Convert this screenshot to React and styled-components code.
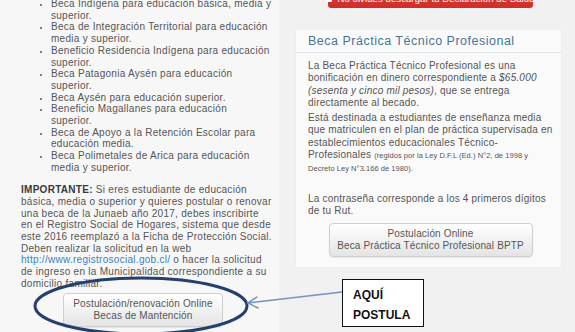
import styled, { createGlobalStyle } from 'styled-components';

const GlobalStyle = createGlobalStyle`
  html, body {
    margin: 0;
    padding: 0;
  }
  body {
    background: #f1f1f1;
    font-family: "Liberation Sans", Arial, sans-serif;
    overflow: hidden;
  }
`;

// line breaks follow the original page's wrapping
const becas = [
  'Beca Indígena para educación básica, media y superior.',
  'Beca de Integración Territorial para educación media y superior.',
  'Beneficio Residencia Indígena para educación superior.',
  'Beca Patagonia Aysén para educación\nsuperior.',
  'Beca Aysén para educación superior.',
  'Beneficio Magallanes para educación\nsuperior.',
  'Beca de Apoyo a la Retención Escolar para educación media.',
  'Beca Polimetales de Arica para educación media y superior.',
];

const App = () => (
  <>
    <GlobalStyle />
    <Page>
      <LeftColumn>
        <BecaList>
          {becas.map(b => (
            <li key={b}>{b}</li>
          ))}
        </BecaList>
        <Text>
          <strong>IMPORTANTE:</strong> Si eres estudiante de educación básica, media o
          superior y quieres postular o renovar una beca de la Junaeb año 2017, debes
          inscribirte en el Registro Social de Hogares, sistema que desde este 2016
          reemplazó a la Ficha de Protección Social. Deben realizar la solicitud en la web{' '}
          <Link href='#'>http://www.registrosocial.gob.cl/</Link> o hacer la solicitud de
          ingreso en la Municipalidad correspondiente a su domicilio familiar.
        </Text>
        <GrayButton $width={160} $offset={42}>
          Postulación/renovación Online
          <br />
          Becas de Mantención
        </GrayButton>
      </LeftColumn>

      <RightColumn>
        <RedButton>
          <FileIcon />
          No olvides descargar tu Declaración de Salud
        </RedButton>
        <Panel>
          <PanelHeader>Beca Práctica Técnico Profesional</PanelHeader>
          <PanelBody>
            <PanelText>
              La Beca Práctica Técnico Profesional es una bonificación en dinero
              correspondiente a <em>$65.000 (sesenta y cinco mil pesos)</em>, que se
              entrega directamente al becado.
            </PanelText>
            <PanelText>
              Está destinada a estudiantes de enseñanza media que matriculen en el plan de
              práctica supervisada en establecimientos educacionales Técnico-Profesionales{' '}
              <Small>(regidos por la Ley D.F.L (Ed.) N°2, de 1998 y Decreto Ley N°3.166 de 1980).</Small>
            </PanelText>
            <PanelText $gap={17}>
              La contraseña corresponde a los 4 primeros dígitos de tu Rut.
            </PanelText>
            <GrayButton $width={204} $center>
              Postulación Online
              <br />
              Beca Práctica Técnico Profesional BPTP
            </GrayButton>
          </PanelBody>
        </Panel>
      </RightColumn>

      <Annotation viewBox='0 0 575 332' width='575' height='332'>
        <ellipse cx='141' cy='306' rx='106' ry='28' fill='none' stroke='#23406f' strokeWidth='3' />
        <g stroke='#7393ba' strokeWidth='1.5' fill='none' strokeLinecap='round'>
          <line x1='342' y1='292' x2='248' y2='303' />
          <polyline points='257,297 248,303 258,308' />
        </g>
      </Annotation>
      <CalloutBox>
        AQUÍ
        <br />
        POSTULA
      </CalloutBox>
    </Page>
  </>
);

export default App;

const Page = styled.div`
  position: relative;
  width: 575px;
  height: 332px;
  overflow: hidden;
  display: grid;
  grid-template-columns: 279px 265px;
  column-gap: 17px;
  align-items: start;
  background: #f1f1f1;
  color: #555;
  font-size: 10px;
  letter-spacing: 0.28px;
`;

const LeftColumn = styled.div`
  margin-top: -2px;
  padding: 0 6px 40px 21px;
  background: #f7f7f7;
  line-height: 11.7px;
`;

const BecaList = styled.ul`
  margin: 0;
  padding-left: 30px;

  li {
    white-space: pre-line;
  }

  li::marker {
    font-size: 8px;
  }
`;

const Text = styled.p`
  margin: 10.7px 0 0;

  strong {
    color: #3a3a3a;
  }
`;

const Link = styled.a`
  color: #3b7fc0;
  text-decoration: none;
`;

const GrayButton = styled.div`
  box-sizing: border-box;
  width: ${({ $width }) => $width}px;
  margin: 3px 0 0 ${({ $offset }) => $offset || 0}px;
  ${({ $center }) => $center && 'margin: 6px auto 0;'}
  padding: 4px 0 4px;
  border: 1px solid #cfcfcf;
  border-radius: 4px;
  background: linear-gradient(#ffffff, #e4e4e4);
  box-shadow: 0 1px 1px rgba(0, 0, 0, 0.08);
  color: #555;
  text-align: center;
  line-height: 12px;
  letter-spacing: 0.15px;
  white-space: nowrap;
`;

const RightColumn = styled.div`
  display: flex;
  flex-direction: column;
  align-items: center;
`;

const RedButton = styled.div`
  box-sizing: border-box;
  display: flex;
  align-items: center;
  justify-content: center;
  gap: 5px;
  width: 205px;
  height: 19px;
  margin-top: -11px;
  margin-left: 4px;
  border-radius: 3px;
  background: linear-gradient(#df3a33, #cf2f29);
  color: #fff;
  font-size: 9.5px;
  letter-spacing: 0.1px;
  white-space: nowrap;
`;

const FileIcon = styled.span`
  display: block;
  flex: none;
  width: 6px;
  height: 7px;
  border-radius: 1px;
  background: #fff;
`;

const Panel = styled.section`
  align-self: stretch;
  margin-top: 22px;
  background: #fafafa;
  box-shadow: 0 0 2px rgba(0, 0, 0, 0.04);
`;

const PanelHeader = styled.h3`
  margin: 0;
  padding: 0 12px;
  height: 22px;
  line-height: 23px;
  border-bottom: 1px solid #dde6ec;
  color: #4b7396;
  font-size: 12.5px;
  font-weight: normal;
  letter-spacing: 0.5px;
`;

const PanelBody = styled.div`
  padding: 7px 8px 10px 12px;
  line-height: 12.3px;
  letter-spacing: 0.2px;
`;

const PanelText = styled.p`
  margin: ${({ $gap }) => $gap || 3}px 0 0;

  &:first-child {
    margin-top: 0;
  }
`;

const Small = styled.span`
  font-size: 7.5px;
  letter-spacing: 0.05px;
`;

const Annotation = styled.svg`
  position: absolute;
  left: 0;
  top: 0;
  pointer-events: none;
`;

const CalloutBox = styled.div`
  position: absolute;
  left: 342px;
  top: 279px;
  box-sizing: border-box;
  width: 82px;
  height: 48px;
  padding: 5px 0 0 10px;
  border: 1px solid #111;
  background: #fff;
  color: #111;
  font-size: 12px;
  font-weight: bold;
  line-height: 20px;
  letter-spacing: 0;
`;
